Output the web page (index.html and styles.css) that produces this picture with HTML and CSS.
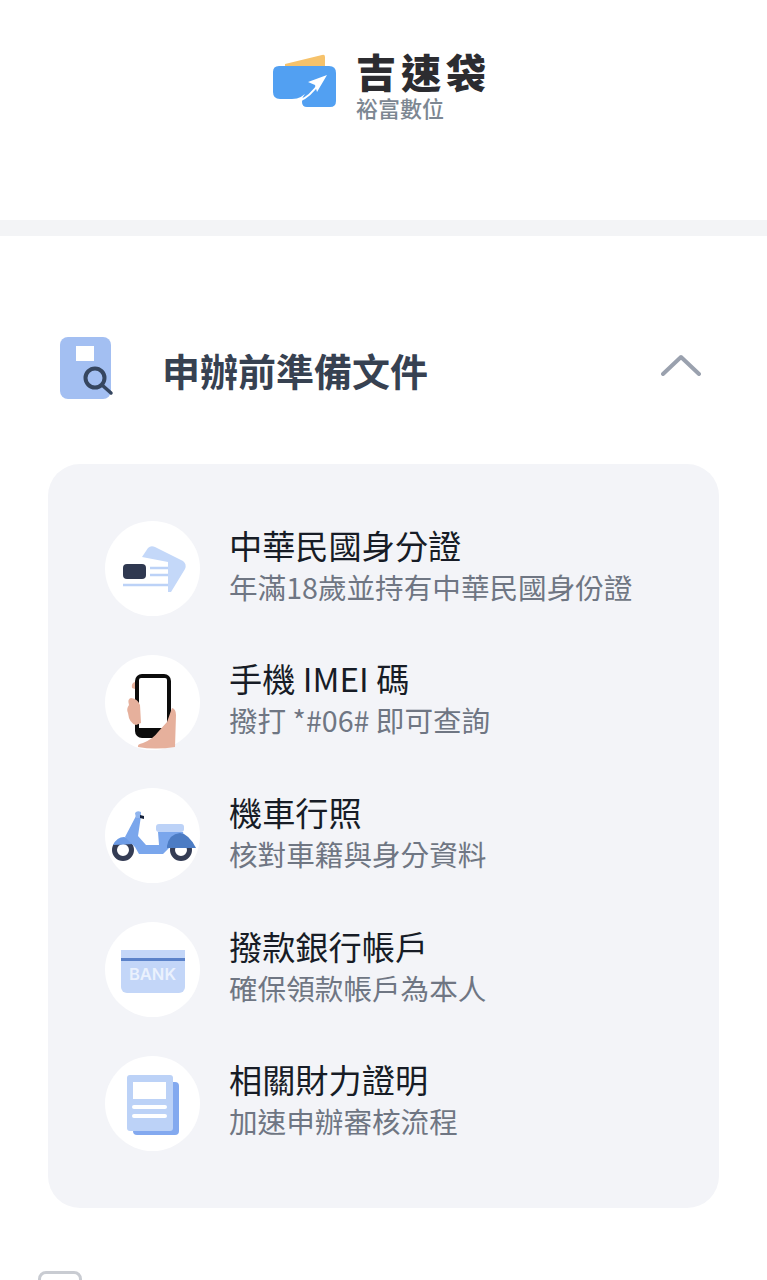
FILE: index.html
```html
<!DOCTYPE html>
<html lang="zh-Hant">
<head>
    <meta charset="UTF-8">
    <meta name="viewport" content="width=device-width, initial-scale=1.0">
    <title>吉速袋 申辦前準備文件</title>
    <link rel="stylesheet" href="styles.css">
</head>
<body>

<div class="page">
    <!-- Logo -->
    <header class="top">
        <div class="logo">
            <svg class="logo-icon" width="66" height="56" viewBox="0 0 66 56">
                <path d="M13 10 L50 1 Q53 0 53 3 L53 12 L13 12 Z" fill="#f6c26b"/>
                <path d="M7 12 H57 Q64 12 64 19 V47 Q64 53 58 53 H35 Q30 53 30 48 Q30 42 35 38 L38 35 Q30 45 20 45 H8 Q1 45 1 38 V18 Q1 12 7 12 Z" fill="#52a0f2"/>
                <path d="M27 47 Q38 43 48 28" stroke="#fff" stroke-width="2" fill="none"/>
                <path d="M36 28 L55 21 L45 38 L43 31 Z" fill="#fff"/>
            </svg>
            <div class="logo-text">
                <div class="logo-name">吉速袋</div>
                <div class="logo-sub">裕富數位</div>
            </div>
        </div>
    </header>

    <div class="divider"></div>

    <!-- 標題列 -->
    <section class="docs">
        <div class="docs-head">
            <svg class="docs-icon" width="56" height="66" viewBox="0 0 56 66">
                <rect x="1" y="0" width="51" height="62" rx="8" fill="#a3bff2"/>
                <rect x="17" y="9" width="18" height="15" fill="#fff"/>
                <circle cx="36" cy="41" r="9.5" fill="#a3bff2" stroke="#36465f" stroke-width="4"/>
                <path d="M43 48 L52 56" stroke="#36465f" stroke-width="3.5" stroke-linecap="round"/>
            </svg>
            <h2 class="docs-title">申辦前準備文件</h2>
            <svg class="chevron" width="40" height="22" viewBox="0 0 40 22">
                <path d="M2 20 L20 3 L38 20" stroke="#9aa1ae" stroke-width="4" fill="none" stroke-linecap="round" stroke-linejoin="round"/>
            </svg>
        </div>

        <div class="card">
            <div class="item">
                <div class="circle">
                    <svg width="95" height="95" viewBox="0 0 95 95">
                        <path d="M37 36 L43 27 Q46 24 50 26 L78 40 Q82 43 80 48 L66 71 L63 71 L63 41 Z" fill="#c4d8f9"/>
                        <rect x="18" y="43" width="23" height="15" rx="4" fill="#2f3850"/>
                        <path d="M45 47 H63 M45 54 H63 M18 64 H63" stroke="#bcd2f7" stroke-width="2.5"/>
                    </svg>
                </div>
                <div class="item-text">
                    <div class="item-title">中華民國身分證</div>
                    <div class="item-desc">年滿18歲並持有中華民國身份證</div>
                </div>
            </div>

            <div class="item">
                <div class="circle">
                    <svg width="95" height="95" viewBox="0 0 95 95">
                        <path d="M30 27 Q26 28 27 33 L30 34 Z" fill="#e6b09c"/>
                        <rect x="30" y="19" width="36" height="64" rx="7" fill="#0c0c0c"/>
                        <path d="M36 23 H60 Q62 23 62 25 V73 H34 V25 Q34 23 36 23 Z" fill="#fff"/>
                        <path d="M67 53 Q71 54 71 60 L70 92 Q50 95 33 92 Q32 89 38 88 Q48 84 53 77 L62 67 Z" fill="#e6b09c"/>
                        <path d="M26 43 Q22 44 24 50 Q21 54 23 58 Q24 68 31 70 L36 68 L35 50 Q33 44 26 43 Z" fill="#e6b09c"/>
                    </svg>
                </div>
                <div class="item-text">
                    <div class="item-title">手機 IMEI 碼</div>
                    <div class="item-desc">撥打 *#06# 即可查詢</div>
                </div>
            </div>

            <div class="item">
                <div class="circle">
                    <svg width="95" height="95" viewBox="0 0 95 95">
                        <circle cx="18" cy="62" r="8.5" fill="#fff" stroke="#343c54" stroke-width="5"/>
                        <circle cx="76" cy="62" r="8.5" fill="#fff" stroke="#343c54" stroke-width="5"/>
                        <path d="M8 57 Q12 49 19 49 Q26 50 29 56 Z" fill="#6d9ce6"/>
                        <path d="M31 28 L36 28 L33 48 L41 57 H54 L53 44 H78 L82 60 H64 L58 66 H34 L30 59 L20 49 Z" fill="#7aa6ec"/>
                        <rect x="51" y="36" width="28" height="8" rx="3" fill="#bcd2f7"/>
                        <path d="M62 58 Q64 46 75 45 Q84 46 91 60 H62 Z" fill="#4c7cc4"/>
                        <path d="M30 25 Q32 22 36 24 L36 30 L31 30 Z" fill="#8fb4ee"/>
                        <path d="M35 27 L39 28 L39 31 L35 30 Z" fill="#14203a"/>
                    </svg>
                </div>
                <div class="item-text">
                    <div class="item-title">機車行照</div>
                    <div class="item-desc">核對車籍與身分資料</div>
                </div>
            </div>

            <div class="item">
                <div class="circle">
                    <div class="bank">
                        <div class="bank-stripe"></div>
                        <div class="bank-label">BANK</div>
                    </div>
                </div>
                <div class="item-text">
                    <div class="item-title">撥款銀行帳戶</div>
                    <div class="item-desc">確保領款帳戶為本人</div>
                </div>
            </div>

            <div class="item">
                <div class="circle">
                    <svg width="95" height="95" viewBox="0 0 95 95">
                        <rect x="28" y="26" width="46" height="53" rx="4" fill="#83a9ef"/>
                        <rect x="22" y="19" width="46" height="56" rx="3" fill="#bcd2f7"/>
                        <rect x="28" y="26" width="33" height="17" fill="#fff"/>
                        <path d="M29 51 H60 M29 60 H60" stroke="#fff" stroke-width="4" stroke-linecap="round"/>
                    </svg>
                </div>
                <div class="item-text">
                    <div class="item-title">相關財力證明</div>
                    <div class="item-desc">加速申辦審核流程</div>
                </div>
            </div>
        </div>

        <!-- 同意條款 -->
        <div class="agree">
            <div class="checkbox"></div>
            <div class="agree-text">本人已詳閱並同意條款</div>
        </div>
    </section>
</div>

</body>
</html>
```

FILE: styles.css
```css
html, body {
    margin: 0;
    height: 1280px;
    overflow: hidden;
    background-color: #fff;
}
body {
    font-family: "Noto Sans CJK TC", "Noto Sans", sans-serif;
}
.page {
    height: 1280px;
    overflow: hidden;
}
.top {
    height: 220px;
    box-sizing: border-box;
    padding-top: 51px;
    display: flex;
    justify-content: center;
}
.logo {
    display: flex;
    align-items: flex-start;
    gap: 18px;
    margin-left: -4px;
}
.logo-icon {
    margin-top: 3px;
}
.logo-name {
    font-size: 40px;
    font-weight: 900;
    line-height: 40px;
    letter-spacing: 5px;
    color: #2c2c30;
}
.logo-sub {
    margin-top: 2px;
    font-size: 22px;
    font-weight: 500;
    line-height: 28px;
    color: #7d8792;
}
.divider {
    height: 16px;
    background-color: #f3f4f6;
}
.docs {
    padding: 100px 48px 0;
}
.docs-head {
    display: flex;
    align-items: center;
    height: 66px;
    padding-left: 11px;
}
.docs-icon {
    flex: none;
    margin-top: 2px;
}
.docs-title {
    margin: 0 0 0 47px;
    font-size: 38px;
    font-weight: 700;
    color: #374151;
    flex: 1;
}
.chevron {
    margin-right: 18px;
    margin-top: -8px;
}
.card {
    margin-top: 62px;
    height: 744px;
    box-sizing: border-box;
    padding: 57px 57px 0;
    background-color: #f3f4f8;
    border-radius: 32px;
    display: flex;
    flex-direction: column;
    gap: 38.7px;
}
.item {
    display: flex;
    align-items: center;
    gap: 29px;
}
.circle {
    width: 95px;
    height: 95px;
    flex: none;
    border-radius: 50%;
    background-color: #fff;
    display: flex;
    align-items: center;
    justify-content: center;
}
.item-text {
    padding-bottom: 8px;
}
.item-title {
    font-size: 33.2px;
    line-height: 44px;
    color: #171c26;
}
.item-desc {
    font-size: 28.6px;
    line-height: 40px;
    color: #6f7683;
}
.bank {
    width: 64px;
    height: 43px;
    margin-top: 4px;
    box-sizing: border-box;
    padding-top: 8px;
    background-color: #c3d6f8;
    border-radius: 0 0 6px 6px;
}
.bank-stripe {
    height: 3px;
    background-color: #5b82c9;
}
.bank-label {
    margin-top: 3px;
    font-family: Inter, sans-serif;
    font-size: 16.5px;
    font-weight: 600;
    line-height: 20px;
    text-align: center;
    color: #eaf1fd;
}
.agree {
    display: flex;
    gap: 343px;
    margin-top: 63px;
    margin-left: -10px;
}
.checkbox {
    width: 44px;
    height: 44px;
    flex: none;
    box-sizing: border-box;
    border: 3px solid #c9ccd2;
    border-radius: 8px;
}
.agree-text {
    font-size: 29px;
    line-height: 44px;
    color: #374151;
    white-space: nowrap;
}
```
